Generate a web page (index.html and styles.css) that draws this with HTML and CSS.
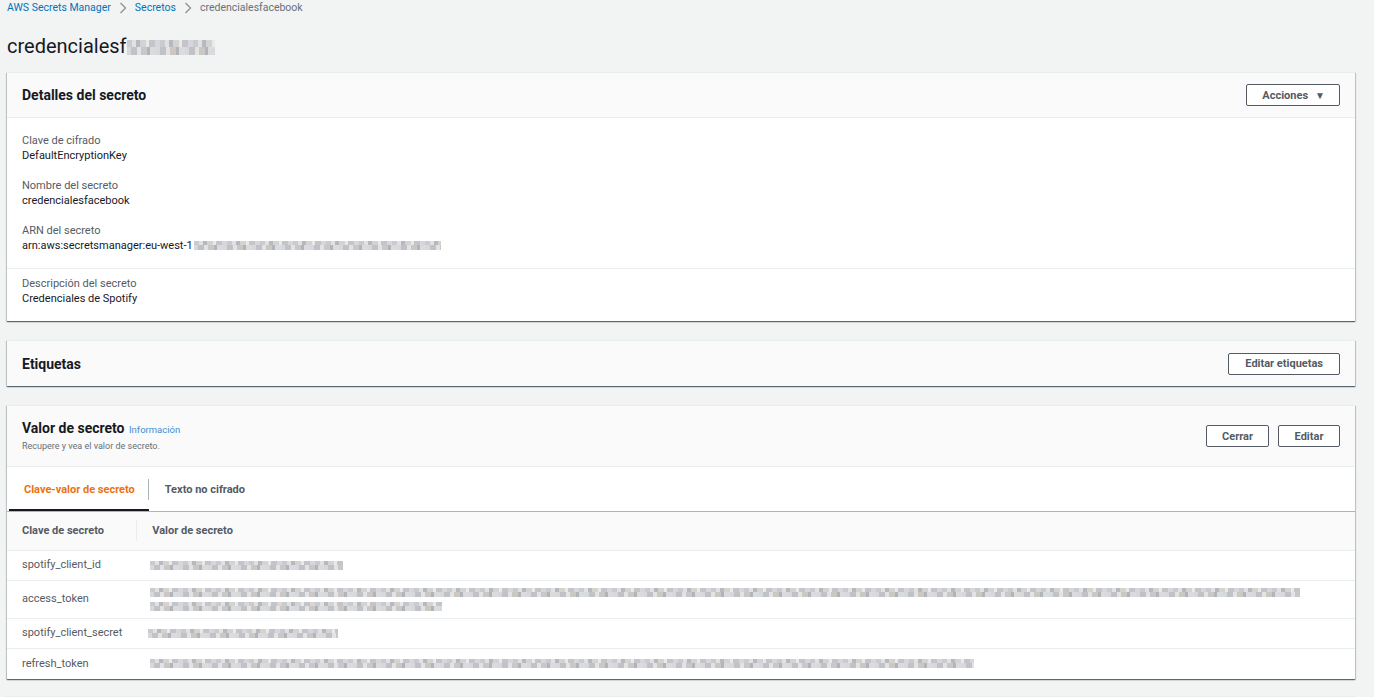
FILE: index.html
```html
<!DOCTYPE html>
<html lang="es">

<head>
  <meta charset="UTF-8">
  <meta name="viewport" content="width=device-width, initial-scale=1.0">
  <title>Secrets Manager</title>
  <link rel="stylesheet" href="styles.css">
</head>

<body>
  <div class="page">
    <nav class="breadcrumb">
      <a href="#">AWS Secrets Manager</a>
      <svg class="chev" viewBox="0 0 8 12" width="8" height="12"><path d="M1.5 1l5 5-5 5" fill="none" stroke="#8b9196" stroke-width="1.3"/></svg>
      <a href="#">Secretos</a>
      <svg class="chev" viewBox="0 0 8 12" width="8" height="12"><path d="M1.5 1l5 5-5 5" fill="none" stroke="#8b9196" stroke-width="1.3"/></svg>
      <span class="current">credencialesfacebook</span>
    </nav>

    <h1 class="title">credencialesf<span class="blur blur-title"></span></h1>

    <section class="panel">
      <header class="panel-head">
        <h2>Detalles del secreto</h2>
        <button type="button" class="btn btn-menu">Acciones <span class="caret">&#9660;</span></button>
      </header>
      <div class="panel-body">
        <div class="field">
          <div class="label">Clave de cifrado</div>
          <div class="value">DefaultEncryptionKey</div>
        </div>
        <div class="field">
          <div class="label">Nombre del secreto</div>
          <div class="value">credencialesfacebook</div>
        </div>
        <div class="field">
          <div class="label">ARN del secreto</div>
          <div class="value">arn:aws:secretsmanager:eu-west-1<span class="blur blur-arn"></span></div>
        </div>
      </div>
      <div class="panel-body panel-body-sub">
        <div class="field">
          <div class="label">Descripción del secreto</div>
          <div class="value">Credenciales de Spotify</div>
        </div>
      </div>
    </section>

    <section class="panel">
      <header class="panel-head panel-head-only">
        <h2>Etiquetas</h2>
        <button type="button" class="btn">Editar etiquetas</button>
      </header>
    </section>

    <section class="panel">
      <header class="panel-head panel-head-tall">
        <div>
          <h2>Valor de secreto <a href="#" class="info">Información</a></h2>
          <p class="desc">Recupere y vea el valor de secreto.</p>
        </div>
        <div class="actions">
          <button type="button" class="btn">Cerrar</button>
          <button type="button" class="btn">Editar</button>
        </div>
      </header>
      <div class="tabs">
        <a href="#" class="tab active">Clave-valor de secreto</a>
        <a href="#" class="tab">Texto no cifrado</a>
      </div>
      <table class="kv">
        <thead>
          <tr>
            <th class="col-key"><span>Clave de secreto</span></th>
            <th>Valor de secreto</th>
          </tr>
        </thead>
        <tbody>
          <tr>
            <td>spotify_client_id</td>
            <td><span class="blur blur-id"></span></td>
          </tr>
          <tr class="tall">
            <td>access_token</td>
            <td><span class="blur blur-long"></span><span class="blur blur-long2"></span></td>
          </tr>
          <tr>
            <td>spotify_client_secret</td>
            <td><span class="blur blur-secret"></span></td>
          </tr>
          <tr>
            <td>refresh_token</td>
            <td><span class="blur blur-refresh"></span></td>
          </tr>
        </tbody>
      </table>
    </section>

    <section class="panel panel-next"></section>
  </div>
</body>

</html>
```

FILE: styles.css
```css
* {
  box-sizing: border-box;
  margin: 0;
  padding: 0;
}

body {
  background: #f2f3f3;
  color: #16191f;
  font-family: Roboto, "Liberation Sans", sans-serif;
  font-size: 11px;
  overflow: hidden;
}

a {
  text-decoration: none;
}

.page {
  padding: 0 19px 0 7px;
}

.breadcrumb {
  display: flex;
  align-items: center;
  height: 15px;
  gap: 8px;
  font-size: 10.5px;
}

.breadcrumb a {
  color: #0073bb;
}

.breadcrumb .current {
  color: #687078;
}

.title {
  margin: 20px 0 15px;
  font-size: 20px;
  font-weight: 400;
  line-height: 22px;
}

.panel {
  background: #fff;
  margin-bottom: 19px;
  box-shadow: 0 1px 1px 0 rgba(0, 28, 36, .5), 1px 1px 1px 0 rgba(0, 28, 36, .15), -1px 1px 1px 0 rgba(0, 28, 36, .15);
  border-top: 1px solid #eaeded;
}

.panel-head {
  display: flex;
  align-items: center;
  justify-content: space-between;
  height: 45px;
  padding: 0 15px;
  background: #fafafa;
  border-bottom: 1px solid #eaeded;
}

.panel-head-only {
  border-bottom: 0;
}

.panel-head-tall {
  height: 61px;
}

.panel-head h2 {
  font-size: 14px;
  font-weight: 700;
  line-height: 16px;
}

.info {
  margin-left: 1px;
  color: #3f8fcf;
  font-size: 9.5px;
  font-weight: 400;
}

.desc {
  margin-top: 1px;
  color: #687078;
  font-size: 9px;
  line-height: 14px;
}

.actions {
  display: flex;
  gap: 9px;
}

.btn {
  display: inline-flex;
  align-items: center;
  justify-content: center;
  gap: 8px;
  height: 22px;
  padding: 0 16px;
  border: 1px solid #545b64;
  border-radius: 2px;
  background: #fff;
  color: #545b64;
  font-family: inherit;
  font-size: 11px;
  font-weight: 700;
  cursor: pointer;
}

.btn-menu {
  gap: 7px;
  padding: 0 14px 0 15px;
}

.caret {
  font-size: 10px;
  color: #545b64;
}

.actions .btn {
  min-width: 62px;
  padding: 0 15px;
}

.panel-body {
  padding: 15px;
  border-bottom: 1px solid #eaeded;
}

.panel-body-sub {
  padding-top: 7px;
  border-bottom: 0;
}

.field+.field {
  margin-top: 15px;
}

.label {
  color: #545b64;
  line-height: 15px;
}

.value {
  display: flex;
  align-items: center;
  line-height: 15px;
}

.tabs {
  display: flex;
  align-items: center;
  height: 45px;
  padding-left: 2px;
  border-bottom: 1px solid #aab7b8;
}

.tab {
  display: flex;
  align-items: center;
  height: 100%;
  padding: 0 14px 0 15px;
  color: #545b64;
  font-weight: 700;
  position: relative;
}

.tab.active {
  color: #ec7211;
  box-shadow: inset 0 -2px 0 #16191f;
}

.tab.active::after {
  content: "";
  position: absolute;
  right: 0;
  top: 12px;
  bottom: 11px;
  border-right: 1px solid #aab7b8;
}

.tab+.tab {
  padding-left: 16px;
}

.kv {
  width: 100%;
  border-collapse: collapse;
  font-size: 11px;
}

.kv th {
  height: 38px;
  padding: 0 15px;
  background: #fafafa;
  color: #545b64;
  font-weight: 700;
  text-align: left;
  border-bottom: 1px solid #eaeded;
}

.kv th.col-key {
  width: 129px;
  padding-right: 0;
}

.kv th.col-key span {
  display: block;
  line-height: 21px;
  border-right: 1px solid #eaeded;
}

.kv td {
  height: 30px;
  padding: 0 15px;
  color: #545b64;
  border-bottom: 1px solid #eaeded;
  line-height: 14px;
}

.kv tr:last-child td {
  border-bottom: 0;
  height: 31px;
}

.kv tr.tall td {
  height: 38px;
}

.blur {
  display: block;
  height: 9px;
  background:
    repeating-linear-gradient(90deg, #cacbce 0 5px, #e0e1e3 5px 9px, #b6b9bf 9px 13px, #d5d3d0 13px 19px, #e9e9eb 19px 22px, #c3c5ca 22px 28px, #d8d6db 28px 33px) 0 0/100% 4px no-repeat,
    repeating-linear-gradient(90deg, #d7d8da 0 4px, #c0c2c7 4px 10px, #e3e3e5 10px 14px, #cac7c5 14px 20px, #b0b5bc 20px 23px, #dadbde 23px 29px) 0 4px/100% 5px no-repeat;
}

.title .blur,
.value .blur {
  display: inline-block;
}

.blur-title {
  width: 88px;
  height: 15px;
  vertical-align: -2px;
  background-size: 100% 7px, 100% 8px;
  background-position: 0 0, 0 7px;
}

.blur-arn {
  width: 247px;
  margin-left: 1px;
}

.blur-id {
  width: 193px;
  margin-left: -2px;
}

.blur-long {
  width: 1150px;
  margin-left: -2px;
}

.blur-long2 {
  width: 292px;
  margin: 5px 0 0 -2px;
}

.blur-secret {
  width: 190px;
  margin-left: -4px;
}

.blur-refresh {
  width: 824px;
  margin-left: -2px;
}

.panel-next {
  height: 40px;
  margin-top: -2px;
}
```
